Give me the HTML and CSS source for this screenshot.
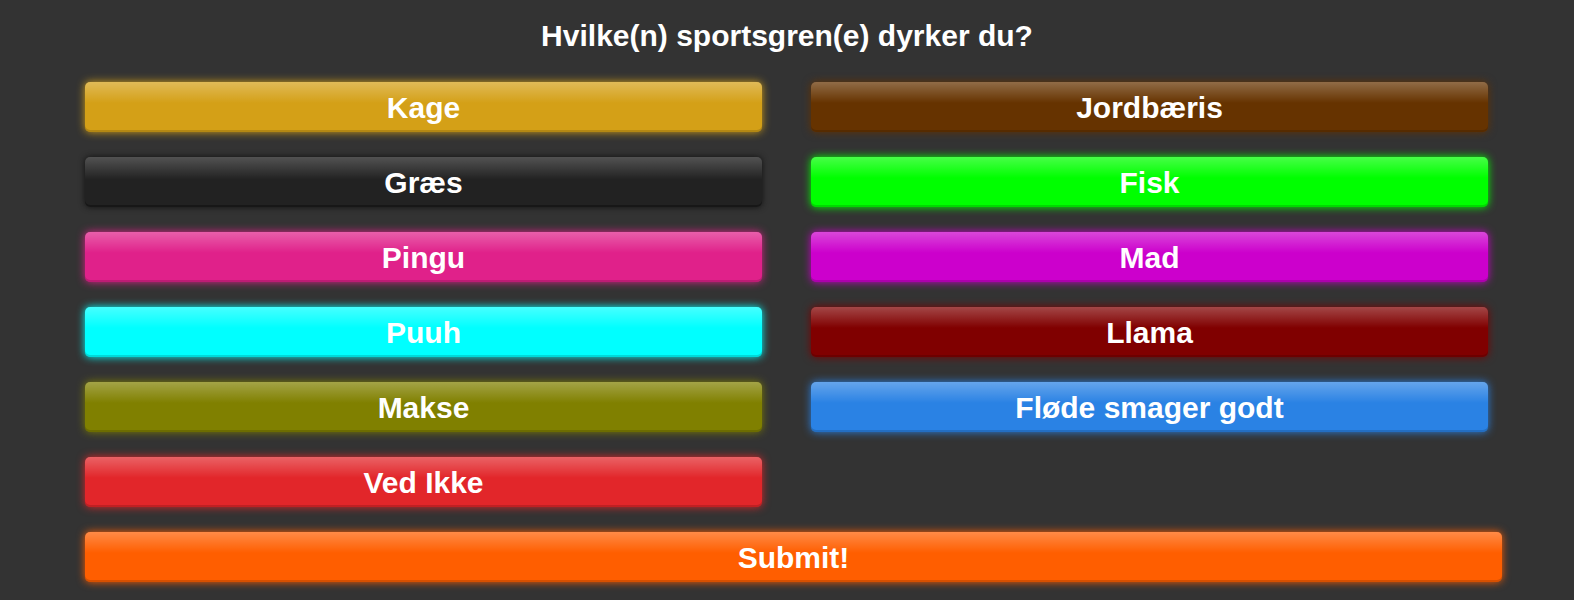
FILE: index.html
```html
<!DOCTYPE html>
<html lang="da">
<head>
<meta charset="utf-8">
<title>Hvilke(n) sportsgren(e) dyrker du?</title>
<link rel="stylesheet" href="styles.css">
</head>
<body>
<form class="poll">
  <h1 class="title">Hvilke(n) sportsgren(e) dyrker du?</h1>
  <div class="options">
    <button type="button" class="opt c-kage">Kage</button>
    <button type="button" class="opt c-jordbaer">Jordbæris</button>
    <button type="button" class="opt c-graes">Græs</button>
    <button type="button" class="opt c-fisk">Fisk</button>
    <button type="button" class="opt c-pingu">Pingu</button>
    <button type="button" class="opt c-mad">Mad</button>
    <button type="button" class="opt c-puuh">Puuh</button>
    <button type="button" class="opt c-llama">Llama</button>
    <button type="button" class="opt c-makse">Makse</button>
    <button type="button" class="opt c-flode">Fløde smager godt</button>
    <button type="button" class="opt c-vedikke">Ved Ikke</button>
  </div>
  <button type="submit" class="opt submit">Submit!</button>
</form>
</body>
</html>
```
FILE: styles.css
```css
html, body {
  margin: 0;
  padding: 0;
  background: #333333;
  height: 100%;
}
body {
  font-family: "Liberation Sans", Arial, sans-serif;
  color: #fff;
  overflow: hidden;
}
.poll {
  display: flex;
  flex-direction: column;
}
.title {
  margin: 0;
  padding-top: 19px;
  margin-bottom: 29px;
  font-size: 30px;
  line-height: 34px;
  font-weight: bold;
  text-align: center;
  color: #fff;
}
.options {
  margin-left: 85px;
  display: grid;
  grid-template-columns: 677px 677px;
  column-gap: 49px;
  row-gap: 25px;
}
.opt {
  display: block;
  height: 50px;
  border: none;
  border-radius: 5px;
  padding: 0;
  font-family: "Liberation Sans", Arial, sans-serif;
  font-size: 30px;
  font-weight: bold;
  line-height: 51px;
  color: #fff;
  text-align: center;
  background-image: linear-gradient(to bottom, rgba(255,255,255,0.28) 0%, rgba(255,255,255,0) 42%);
  --c: #888;
  background-color: var(--c);
  box-shadow: 0 0 9px var(--c), inset 0 -2px 0 rgba(0,0,0,0.15);
  cursor: pointer;
}
.submit {
  margin-left: 85px;
  margin-top: 25px;
  width: 1417px;
  --c: #ff5e00;
}
.c-kage { --c: #d4a017; }
.c-jordbaer { --c: #663300; }
.c-graes { --c: #222222; background-image: linear-gradient(to bottom, rgba(255,255,255,0.22) 0%, rgba(255,255,255,0) 45%); box-shadow: 0 0 6px #111, inset 0 -2px 0 rgba(0,0,0,0.3); }
.c-fisk { --c: #00ff00; }
.c-pingu { --c: #e0218a; }
.c-mad { --c: #cc00cc; }
.c-puuh { --c: #00ffff; }
.c-llama { --c: #800000; }
.c-makse { --c: #808000; }
.c-flode { --c: #2a82e4; }
.c-vedikke { --c: #e2262a; }
```
